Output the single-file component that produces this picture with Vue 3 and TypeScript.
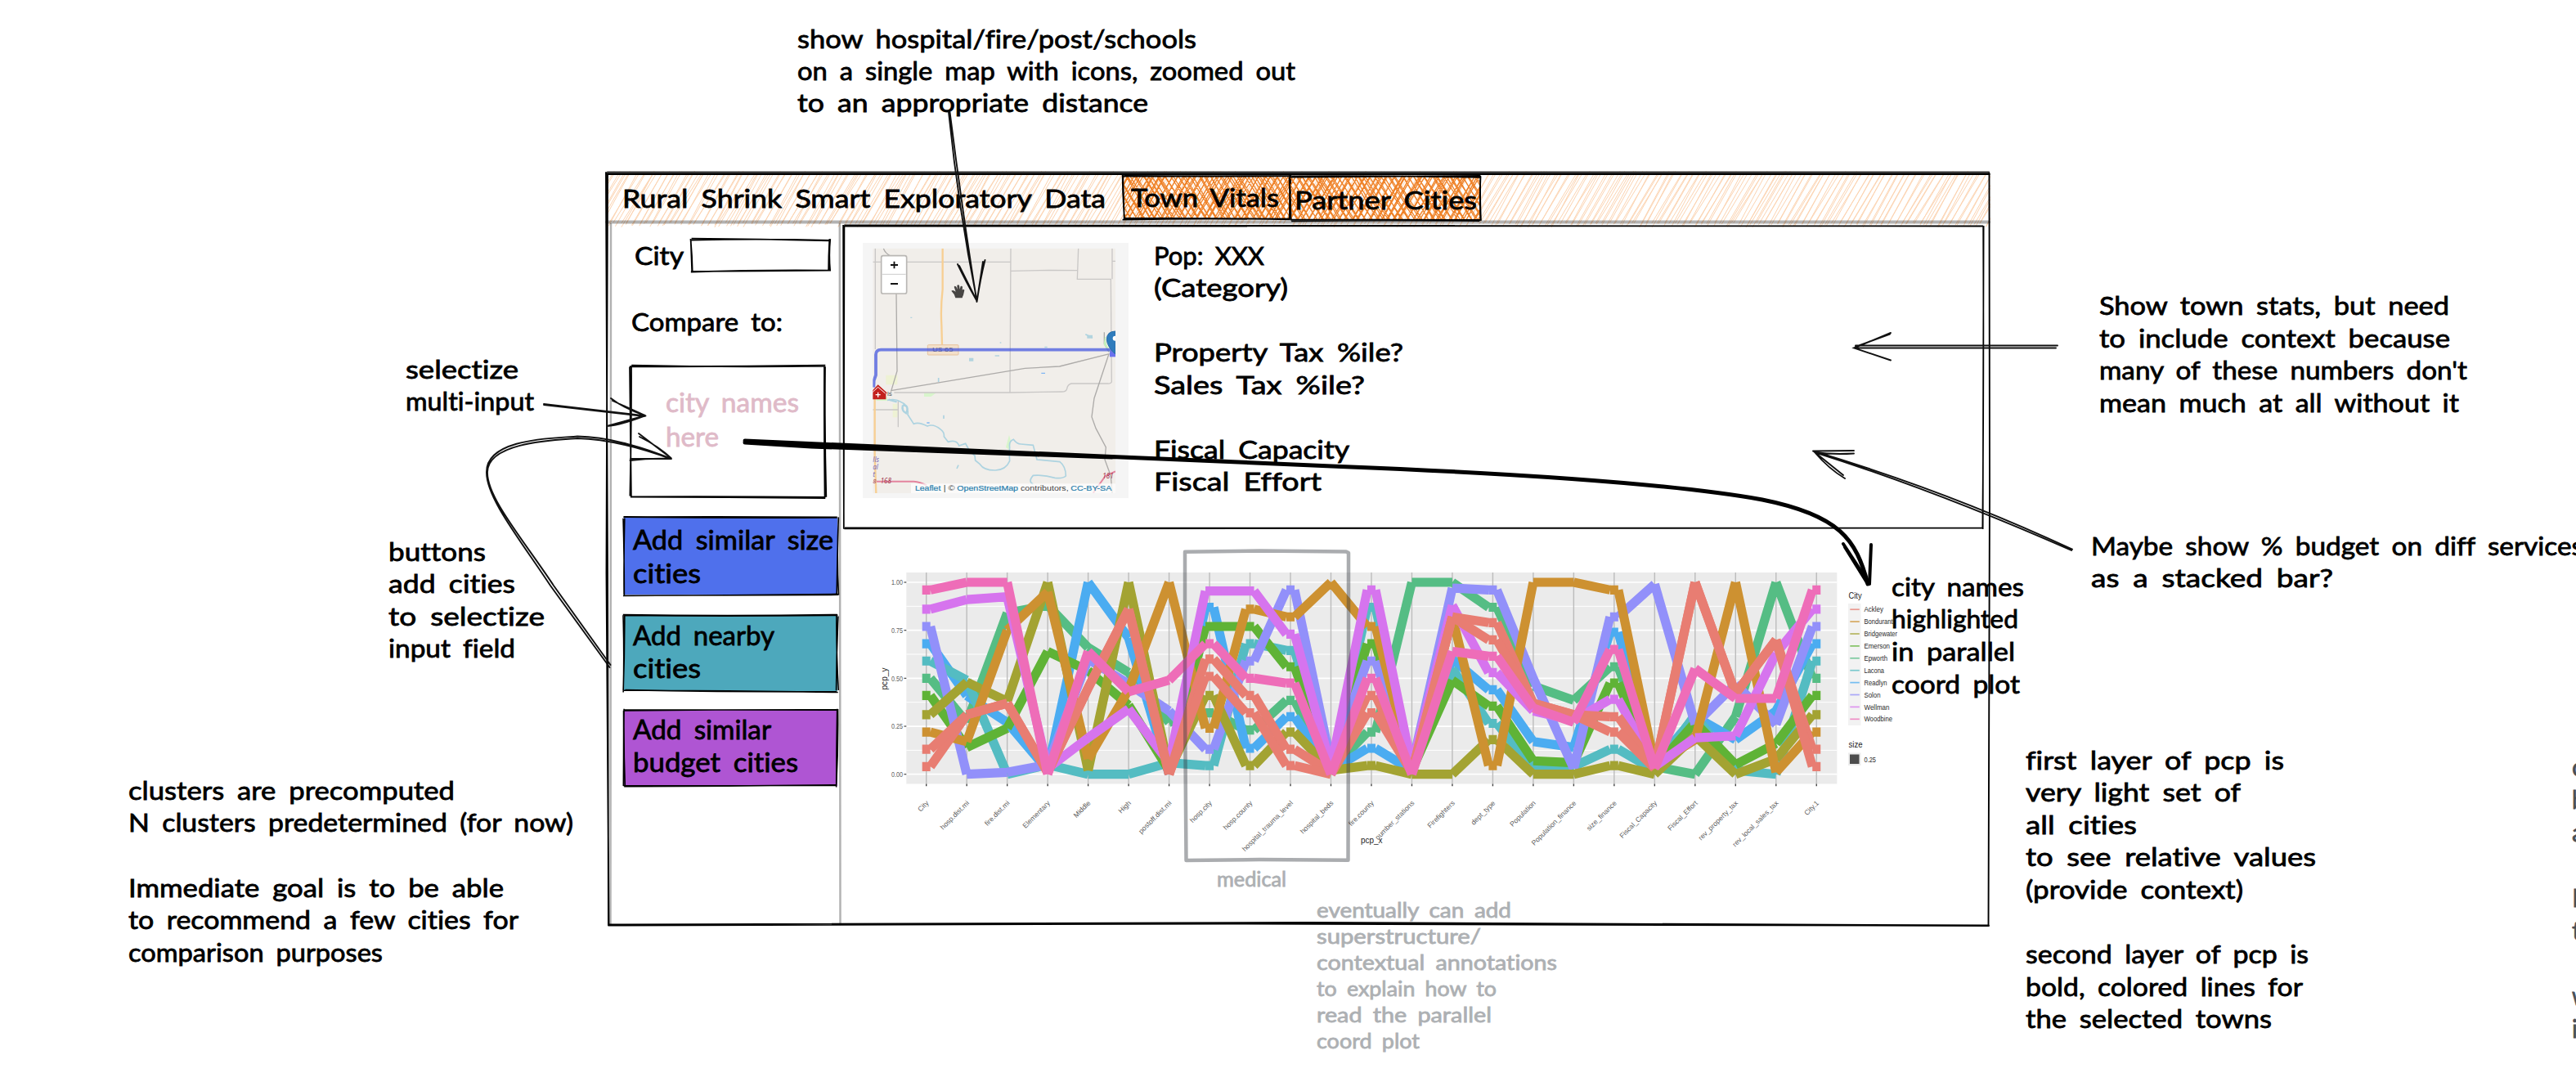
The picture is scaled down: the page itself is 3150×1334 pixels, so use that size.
<script setup lang="ts">
import { h } from 'vue'

type Line = [text: string, width: number]
interface Note { x: number; base: number; pitch?: number; size?: number; tone?: string; lines: Line[] }

// Handwritten text block: every line is fitted to its own written width.
const Scribble = (p: { lines: Line[]; pitch?: number; size?: number }) => {
  const pitch = p.pitch ?? 39.4
  const size = p.size ?? 31.5
  return h('div', { class: 'scribble' }, p.lines.map(([text, w]) =>
    h('svg', { width: w || 1, height: pitch, style: 'display:block;overflow:visible' },
      text ? [h('text', { x: 0, y: 30, textLength: w, lengthAdjust: 'spacingAndGlyphs', 'font-size': size, fill: 'currentColor', stroke: 'currentColor', 'stroke-width': 0.8 }, text)] : [])))
}
Scribble.props = ['lines', 'pitch', 'size']

function rng(seed: number) {
  let s = seed * 9301 + 49297
  return () => { s = (s * 9301 + 49297) % 233280; return s / 233280 }
}

// Double-stroked, slightly wobbly rectangle outline.
const Rough = (p: { w: number; h: number; seed: number; sw?: number; jitter?: number; color?: string; opacity?: number }) => {
  const r = rng(p.seed)
  const j = () => (r() - 0.5) * (p.jitter ?? 3)
  let d = ''
  for (let k = 0; k < 2; k++) {
    const c = [[0, 0, p.w, 0], [p.w, 0, p.w, p.h], [p.w, p.h, 0, p.h], [0, p.h, 0, 0]]
    for (const [x1, y1, x2, y2] of c) {
      d += `M${x1 + j()} ${y1 + j()}Q${(x1 + x2) / 2 + j()} ${(y1 + y2) / 2 + j()} ${x2 + j()} ${y2 + j()}`
    }
  }
  return h('svg', { class: 'rough', width: p.w, height: p.h },
    [h('path', { d, fill: 'none', stroke: p.color ?? '#000', 'stroke-width': p.sw ?? 1.5, opacity: p.opacity ?? 1 })])
}
Rough.props = ['w', 'h', 'seed', 'sw', 'jitter', 'color', 'opacity']

function hatch(w: number, ht: number, gap: number, run: number, seed: number, over: number) {
  const r = rng(seed)
  let d = ''
  for (let x = -Math.abs(run); x < w + Math.abs(run); x += gap) {
    for (let k = 0; k < 2; k++) {
      const a = x + (r() - 0.5) * 4
      const b = a + run + (r() - 0.5) * 5
      d += `M${a.toFixed(1)} ${(ht + r() * over).toFixed(1)}L${b.toFixed(1)} ${(-r() * over * 0.5).toFixed(1)}`
    }
  }
  return d
}
const headerHatch = hatch(1691, 60, 7.6, 37, 3, 6)
const tabHatchA = hatch(204, 53, 7.5, 32, 5, 4)
const tabHatchB = hatch(204, 53, 7.5, -34, 7, 4)
const tabHatchC = hatch(232, 53, 7.5, 32, 11, 4)
const tabHatchD = hatch(232, 53, 7.5, -34, 13, 4)

const title: Line[] = [['Rural Shrink Smart Exploratory Data', 591]]
const stats: Line[] = [['Pop: XXX', 135], ['(Category)', 164], ['', 0], ['Property Tax %ile?', 305], ['Sales Tax %ile?', 258], ['', 0], ['Fiscal Capacity', 239], ['Fiscal Effort', 205]]

const buttons = [
  { cls: 'size', h: 94, seed: 21, lines: [['Add similar size', 245], ['cities', 83]] as Line[] },
  { cls: 'near', h: 92, seed: 22, lines: [['Add nearby', 173], ['cities', 83]] as Line[] },
  { cls: 'budget', h: 93, seed: 25, lines: [['Add similar', 169], ['budget cities', 202]] as Line[] },
]

const notes: Note[] = [
  { x: 975, base: 58, lines: [['show hospital/fire/post/schools', 488], ['on a single map with icons, zoomed out', 609], ['to an appropriate distance', 429]] },
  { x: 495.5, base: 462.5, lines: [['selectize', 138], ['multi-input', 157]] },
  { x: 474.5, base: 685, pitch: 39.6, lines: [['buttons', 119], ['add cities', 155], ['to selectize', 191], ['input field', 155]] },
  { x: 157, base: 977, pitch: 39.7, lines: [['clusters are precomputed', 399], ['N clusters predetermined (for now)', 544], ['', 0], ['Immediate goal is to be able', 459], ['to recommend a few cities for', 477], ['comparison purposes', 311]] },
  { x: 2567, base: 384.5, pitch: 39.6, lines: [['Show town stats, but need', 428], ['to include context because', 429], ['many of these numbers don\'t', 450], ['mean much at all without it', 440]] },
  { x: 2557, base: 678, lines: [['Maybe show % budget on diff services', 602], ['as a stacked bar?', 296]] },
  { x: 2477, base: 940, pitch: 39.6, lines: [['first layer of pcp is', 316], ['very light set of', 263], ['all cities', 136], ['to see relative values', 355], ['(provide context)', 266], ['', 0], ['second layer of pcp is', 346], ['bold, colored lines for', 339], ['the selected towns', 301]] },
  { x: 2313, base: 728, pitch: 39.7, lines: [['city names', 162], ['highlighted', 155], ['in parallel', 151], ['coord plot', 157]] },
  { x: 1487.5, base: 1083.7, size: 25.6, tone: 'faint', lines: [['medical', 85]] },
  { x: 1610, base: 1121, pitch: 32, size: 25.6, tone: 'faint', lines: [['eventually can add', 238], ['superstructure/', 201], ['contextual annotations', 294], ['to explain how to', 220], ['read the parallel', 214], ['coord plot', 126]] },
  { x: 3145, base: 948, pitch: 40, tone: 'slate', lines: [['c', 15], ['b', 16], ['a', 16], ['', 0], ['I', 9], ['t', 12], ['', 0], ['w', 22], ['i', 7]] },
]

// Parallel coordinates
const axes = ['City', 'hosp.dist.mi', 'fire.dist.mi', 'Elementary', 'Middle', 'High', 'postoff.dist.mi', 'hosp.city', 'hosp.county', 'hospital_trauma_level', 'hospital_beds', 'fire.county', 'number_stations', 'Firefighters', 'dept_type', 'Population', 'Population_finance', 'size_finance', 'Fiscal_Capacity', 'Fiscal_Effort', 'rev_property_tax', 'rev_local_sales_tax', 'City.1']
const ax = (i: number) => 1132.7 + i * 49.48
const vy = (v: number) => 946.7 - v * 234.7
const factor = new Set([0, 7, 8, 9, 11, 14, 17, 22])
const series: { color: string; v: number[] }[] = [
  { color: '#55bd84', v: [.5, .27, .84, .88, .66, .53, .27, .32, .23, .385, .02, .22, 1, 1, .87, .46, .385, .56, .04, 0, .3, 1, .5] },
  { color: '#4bacf1', v: [.68, .41, .27, .02, 1, .71, 0, .87, .135, .3, .02, .135, .02, .6, .44, .17, .14, .74, .05, .3, .18, .33, .68] },
  { color: '#54bcc2', v: [.59, .49, 0, .05, 0, 0, .06, .045, .68, .645, .02, .87, .02, .55, .265, .03, .04, .13, .02, .31, .02, 0, .59] },
  { color: '#5fb336', v: [.41, .14, .24, .64, .54, .36, .02, .77, .77, .56, .02, .68, .02, .49, .355, .07, .06, .475, .03, .27, .05, .16, .41] },
  { color: '#9290fa', v: [.77, 0, .01, .05, .6, .47, .33, .13, .59, .96, .06, .59, .04, .97, .96, .5, .03, .82, .99, .26, .47, .26, .77] },
  { color: '#a3a332', v: [.31, .48, .38, 1, .02, 1, .02, .41, .045, .22, .02, .045, 0, 0, .18, 0, 0, .045, 0, .2, 0, .08, .31] },
  { color: '#cd9131', v: [.22, .17, .75, .95, .08, .44, 1, .24, .86, .82, 1, .77, .02, .82, .045, 1, 1, .96, .05, .18, 1, .01, .22] },
  { color: '#d674ee', v: [.86, .91, .925, .03, .19, .34, .06, .955, .955, .73, .04, .96, .04, .88, .53, .33, .28, .39, .04, .19, .2, .63, .86] },
  { color: '#e87d72', v: [.04, .31, .37, .01, .45, .86, 0, .6, .41, .13, .01, .41, .01, .82, .79, .37, .31, .3, .03, 1, .42, .7, .13] },
  { color: '#e87d72', v: [.13, .31, .37, .01, .45, .86, 0, .51, .32, .045, 0, .32, .01, .82, .7, .37, .31, .22, .03, 1, .42, .7, .04] },
  { color: '#ee6db8', v: [.96, 1, 1, 0, .64, .43, .49, .68, .5, .475, 0, .5, 0, .64, .615, .345, .27, .65, .03, .55, .395, .395, .96] },
]
function trace(v: number[]) {
  let d = ''
  for (let i = 0; i < 23; i++) {
    if (factor.has(i)) d += `M${ax(i) - 5} ${vy(v[i])}H${ax(i) + 5}`
    if (i < 22) {
      const a = ax(i) + (factor.has(i) ? 5 : 0)
      const b = ax(i + 1) - (factor.has(i + 1) ? 5 : 0)
      d += `M${a} ${vy(v[i])}L${b} ${vy(v[i + 1])}`
    }
  }
  return d
}
const cities: [string, string, number][] = [['Ackley', '#e87d72', 23.5], ['Bondurant', '#cd9131', 35], ['Bridgewater', '#a3a332', 40.5], ['Emerson', '#5fb336', 31.5], ['Epworth', '#55bd84', 28.5], ['Lacona', '#54bcc2', 24.5], ['Readlyn', '#4bacf1', 28], ['Solon', '#9290fa', 20], ['Wellman', '#d674ee', 31], ['Woodbine', '#ee6db8', 34.5]]
</script>

<template>
  <div class="board">
    <section class="app">
      <header class="bar">
        <svg class="rough" width="1691" height="62">
          <clipPath id="strip"><rect x="-1" y="-4" width="1693" height="74" /></clipPath>
          <path :d="headerHatch" clip-path="url(#strip)" stroke="#fbc08e" stroke-width="1" opacity=".68" />
        </svg>
        <Scribble class="title" :lines="title" />
        <div class="tab town">
          <svg class="rough clip" width="204" height="53"><path :d="tabHatchA + tabHatchB" stroke="#ef8228" stroke-width="1.25" /></svg>
          <Rough :w="204" :h="53" :seed="4" :sw="1.8" />
          <Scribble :lines="[['Town Vitals', 181]]" />
        </div>
        <div class="tab partner">
          <svg class="rough clip" width="232" height="53"><path :d="tabHatchC + tabHatchD" stroke="#ef8228" stroke-width="1.25" /></svg>
          <Rough :w="232" :h="53" :seed="9" :sw="1.8" />
          <Scribble :lines="[['Partner Cities', 223]]" />
        </div>
      </header>
      <div class="body">
        <aside class="side">
          <div class="row">
            <Scribble :lines="[['City', 60]]" />
            <div class="input"><Rough :w="168" :h="38" :seed="14" :sw="1.8" /></div>
          </div>
          <Scribble class="compare" :lines="[['Compare to:', 185]]" />
          <div class="select">
            <Rough :w="238" :h="160" :seed="17" :sw="1.8" />
            <Scribble :lines="[['city names', 163], ['here', 65]]" :pitch="42" :size="33" />
          </div>
          <div v-for="b in buttons" :key="b.cls" class="btn" :class="b.cls">
            <Rough :w="261" :h="b.h" :seed="b.seed" :sw="1.6" />
            <Scribble :lines="b.lines" :pitch="40.5" :size="32.5" />
          </div>
        </aside>
        <main class="main">
          <div class="panel">
            <Rough :w="1393" :h="370" :seed="31" :sw="1.7" :jitter="2" />
            <div class="map">
              <svg width="325" height="311.7" viewBox="75 50 975 935" fill="none">
                <clipPath id="tile"><rect x="112" y="70" width="890" height="898" /></clipPath>
                <g clip-path="url(#tile)">
                  <rect x="112" y="70" width="890" height="898" fill="#f1eeea" />
                  <path d="M160 535h42v35h-42zM185 640h18v50h-18z" fill="#eef2d4" />
                  <path d="M300 600h45l-20 14h-25zM600 800l12-45 6 20-4 35zM125 615h40v14h-40z" fill="#d8f5cb" />
                  <g stroke="#c9c7c6" stroke-width="4">
                    <path d="M121 70V440M112 120H617M618 70L615 598M619 153L760 150 861 151M866 70L862 183H985L988 560Q985 567 975 566H840Q826 570 824 585 822 596 805 596L615 599 190 599M990 70V183M205 628V726M112 662H205M990 117h12" />
                  </g>
                  <g stroke="#adaba9" stroke-width="4">
                    <path d="M151 70Q156 88 180 100M198 235L201 520 178 597M178 592L670 510 797 503 980 457M978 457L924 620 915 688 930 730 967 800 963 845 985 905 990 968M961 378V420L978 450" />
                  </g>
                  <path d="M368 70V220Q360 290 364 350L366 425M119 590V830L124 968" stroke="#f7cf93" stroke-width="7" />
                  <g stroke="#add3e0" stroke-width="5">
                    <path d="M165 627Q195 620 212 632 245 645 240 680 248 692 262 714 280 705 312 722 335 712 362 735 375 745 373 760L388 780Q420 770 428 794L452 786 468 815 486 830 488 848 505 862Q520 885 562 884 600 883 614 850 612 825 614 800 610 778 628 771 640 788 655 788L700 792 714 845 798 853Q820 870 820 905 810 915 780 912 740 900 700 903 680 925 700 935M372 682V695M353 545V560M426 865L420 878M892 385L918 398" />
                    <path d="M222 645q25 0 12 30-18-10-12-30M170 625l30 8" stroke-width="7" />
                  </g>
                  <path d="M465 472h16v12h-16zM560 462h16v4h-16zM742 430h10v5h-10zM898 388h20v12h-20zM578 414h5v4h-5zM250 322h6v4h-6z" fill="#b2d4df" />
                  <path d="M730 526h14v4h-14zM310 708h10v4h-10z" fill="#7fb6f4" />
                  <path d="M125 925H262Q285 926 310 940M920 968L965 905 1002 888" stroke="#e4849e" stroke-width="6" />
                  <path d="M965 395q-5 25 18 55l-22-28z" fill="#c4f0bb" stroke="#c4f0bb" stroke-width="4" />
                  <rect x="313" y="424" width="113" height="37" rx="3" fill="#f3e0ca" stroke="#e8c39e" stroke-width="3" />
                  <text x="330" y="450" font-family="Noto Sans" font-size="23" textLength="77" lengthAdjust="spacingAndGlyphs" fill="#6d625d">US 65</text>
                  <path d="M115 580L116 555 123 535V462Q122 442 142 442H985L992 460" stroke="#4356df" stroke-opacity=".74" stroke-width="11.500" />
                  <rect x="981" y="450" width="21" height="18" fill="#6b72ee" />
                  <path d="M1002 374Q970 374 970 405 972 430 998 455L1002 458Z" fill="#2f7cbd" stroke="#286da8" stroke-width="3" />
                  <circle cx="1001" cy="400" r="9" fill="#fff" />
                  <text x="165" y="611" font-family="Liberation Sans" font-size="24" fill="#555">ls</text>
                  <path d="M104 598L131 570 164 600 160 604V624H104Z" fill="#c3201d" />
                  <path d="M106 602L131 579 158 602" stroke="#fff" stroke-width="3" />
                  <path d="M131 598v18M122 607h18" stroke="#fff" stroke-width="4" />
                  <g font-family="Noto Sans" font-style="italic" font-size="24" fill="#7d68b8">
                    <text x="112" y="855">lls</text><text x="112" y="881">al</text><text x="112" y="907">t</text>
                  </g>
                  <text x="112" y="933" font-family="Noto Sans" font-style="italic" font-size="22" fill="#a43a50">8</text>
                  <text x="140" y="933" font-family="Noto Sans" font-style="italic" font-size="24" fill="#a43a50">168</text>
                  <text x="955" y="915" font-family="Noto Sans" font-style="italic" font-size="24" fill="#a43a50">181</text>
                  <rect x="252" y="933" width="750" height="35" fill="#fff" fill-opacity=".72" />
                  <g font-family="Liberation Sans" font-size="25.5">
                    <text x="267" y="958" textLength="94" lengthAdjust="spacingAndGlyphs" fill="#2a7fae" stroke="#2a7fae" stroke-width=".6">Leaflet</text>
                    <text x="371" y="958" textLength="42" lengthAdjust="spacingAndGlyphs" fill="#444">| ©</text>
                    <text x="421" y="958" textLength="224" lengthAdjust="spacingAndGlyphs" fill="#2a7fae" stroke="#2a7fae" stroke-width=".6">OpenStreetMap</text>
                    <text x="654" y="958" textLength="176" lengthAdjust="spacingAndGlyphs" fill="#444">contributors,</text>
                    <text x="838" y="958" textLength="150" lengthAdjust="spacingAndGlyphs" fill="#2a7fae" stroke="#2a7fae" stroke-width=".6">CC-BY-SA</text>
                  </g>
                  <rect x="143" y="97" width="93" height="139" rx="7" fill="#fff" stroke="#b9b7b4" stroke-width="5" />
                  <path d="M146 165h87" stroke="#ccc" stroke-width="3" />
                  <path d="M177 131h27M190.500 118v26M177 200h27" stroke="#111" stroke-width="5.500" />
                  <path d="M401 231q6-5 16 3l-6-18q4-6 9 2l3 8-1-15q5-4 8 0l2 14 3-11q6-3 7 3l-1 11q5-6 8 1l-5 22v-4l-3 10h-25q-3-15-15-26z" transform="translate(-1 -5)" fill="#484644" />
                </g>
              </svg>
            </div>
            <Scribble class="stats" :lines="stats" :pitch="39.5" />
          </div>
          <svg class="chart" width="1280" height="370" viewBox="1070 690 1280 370">
            <rect x="1108.300" y="700" width="1138" height="258.500" fill="#ebebeb" />
            <g stroke="#fff">
              <path v-for="n in 5" :key="'M' + n" :d="`M1108.3 ${vy((n - 1) / 4)}H2246.3`" stroke-width="1.7" />
              <path v-for="n in 4" :key="'m' + n" :d="`M1108.3 ${vy((n - .5) / 4)}H2246.3`" stroke-width="1" />
            </g>
            <path v-for="(a, i) in axes" :key="a" :d="`M${ax(i)} 700V958.5`" stroke="#bcbcbc" stroke-width="1.4" />
            <path v-for="(s, i) in series" :key="i" :d="trace(s.v)" :stroke="s.color" stroke-width="11.2" fill="none" />
            <g class="tick">
              <template v-for="n in 5" :key="n">
                <text x="1090" :y="vy((n - 1) / 4) + 3.2" textLength="14" lengthAdjust="spacingAndGlyphs">{{ ((n - 1) / 4).toFixed(2) }}</text>
                <path :d="`M1105.5 ${vy((n - 1) / 4)}h2.8`" stroke="#444" stroke-width="1.2" />
              </template>
              <template v-for="(a, i) in axes" :key="a">
                <path :d="`M${ax(i)} 958.500v2.800`" stroke="#444" stroke-width="1.4" />
                <text text-anchor="end" :transform="`translate(${ax(i) + 3.5} 982.5) rotate(-45)`">{{ a }}</text>
              </template>
            </g>
            <g class="axis-title">
              <text transform="translate(1085 843.500) rotate(-90)" textLength="27" lengthAdjust="spacingAndGlyphs">pcp_y</text>
              <text x="1664" y="1031" textLength="26.500" lengthAdjust="spacingAndGlyphs">pcp_x</text>
              <text x="2250.600" y="732" dx="10" textLength="16" lengthAdjust="spacingAndGlyphs">City</text>
              <text x="2260.600" y="914" textLength="17" lengthAdjust="spacingAndGlyphs">size</text>
            </g>
            <rect x="2260" y="738" width="15.500" height="149" fill="#f2f2f2" />
            <g v-for="(c, i) in cities" :key="c[0]" class="key">
              <path :d="`M2262.3 ${745.2 + i * 14.9}h11.5`" :stroke="c[1]" stroke-width="1.7" opacity=".75" />
              <text x="2279.500" :y="748.3 + i * 14.9" :textLength="c[2]" lengthAdjust="spacingAndGlyphs">{{ c[0] }}</text>
            </g>
            <rect x="2260" y="920.500" width="15.500" height="15.500" fill="#ececec" />
            <rect x="2262" y="922.500" width="11.500" height="11.500" fill="#4d4d4d" />
            <text class="key-label" x="2279.500" y="931.500" textLength="14.500" lengthAdjust="spacingAndGlyphs">0.25</text>
          </svg>
        </main>
      </div>
    </section>

    <div v-for="(n, i) in notes" :key="i" class="note" :class="n.tone" :style="{ left: n.x + 'px', top: n.base - 29.5 + 'px' }">
      <Scribble :lines="n.lines" :pitch="n.pitch" :size="n.size" />
    </div>

    <svg class="ink" width="3150" height="1334" fill="none" stroke-linecap="round">
      <g stroke="#000" stroke-opacity=".3">
        <path d="M742 271.500H2432" stroke-width="4" />
        <path d="M747 274L746.500 1130M1026.800 274L1027.500 1130" stroke-width="2.500" />
      </g>
      <path d="M743 210.800H2432" stroke="#333" stroke-width="2.400" />
      <g stroke="#000" stroke-width="1.900">
        <path d="M742 213H2433M743 212.500L741.500 700 744.500 1131M741 211L743 700 744 1131M2432.500 212L2433 600 2431.500 1132M744 1130.500L1600 1128 2432 1131.500M744 1131.500L1500 1129.500 2432 1132" />
      </g>
      <g stroke="#343a40" stroke-opacity=".42" stroke-width="4.500" stroke-linejoin="round">
        <path d="M1449 674.800L1540 673.500 1646 674.500 1649 676 1649 820 1648.500 1051.800 1540 1051 1450.500 1052 1449 860Z" />
      </g>
      <g stroke="#111" stroke-width="1.900">
        <path d="M1160 137Q1172 255 1194.500 367M1161.500 137Q1177 260 1194.500 369M1171 323Q1181 344 1194 367L1173 325M1204.500 318Q1199 340 1194.500 369L1202 320" />
        <path d="M665 494L789.500 508.500M665 495L788 509M747 487Q764 500 789 508L749 490M742 521Q758 520 789.500 508L744 520.500" />
        <path d="M745.500 816L673 716C636 660 594 608 595 577 595 535 680 536 706 533.500 745 534 790 548 821 561M746.500 813L677 716C640 660 595 608 596 577 597 540 680 538 706 536 745 537 790 550 820 561M781 530L821 560.500Q806 546 782 534M770.500 563Q795 560 821 561L771 561" />
        <path d="M2516 422.500H2269M2514 425.500H2268M2312 407L2267 425.500 2312 440.500M2311 408.500L2269 424" />
        <path d="M2534 671.700Q2380 600 2217 551.500M2533 673Q2370 601 2219 553M2217 551.500L2267 551M2219 553Q2240 556 2267 554.500M2219 553Q2236 573 2256 585M2218 552L2254 581" />
      </g>
      <g stroke="#000" stroke-width="5">
        <path d="M911 539L1360 558.500 1640 570.500C1880 580 2060 594 2155 611 2250 630 2270 660 2284 714M911 541L992 546 1360 559" />
        <path d="M2254 665L2286 714M2256 669L2284 714M2288 666L2286 714" stroke-width="4" />
      </g>
    </svg>
  </div>
</template>

<style>
body { background: #fff; overflow: hidden; }
.rough { position: absolute; left: 0; top: 0; overflow: visible; pointer-events: none; }
.scribble text { word-spacing: 0.2em; font-variant-ligatures: none; }
</style>

<style scoped>
.board { position: relative; width: 3150px; height: 1334px; overflow: hidden; background: #fff; color: #000; font-family: Lato, "Open Sans", sans-serif; }
.app { position: absolute; left: 742px; top: 212px; width: 1691px; height: 920px; display: flex; flex-direction: column; }
.bar { position: relative; display: flex; align-items: flex-start; height: 62px; flex: none; }
.title { position: relative; margin: 12px 22px 0 19px; width: 591px; }
.tab { position: relative; box-sizing: border-box; height: 53px; }
.tab > div { position: relative; }
.rough.clip { overflow: hidden; }
.town { width: 204px; margin-top: 3px; padding: 7.5px 0 0 8.5px; }
.partner { width: 232px; margin-top: 4px; padding: 10px 0 0 5px; }
.body { display: flex; flex: 1; }
.side { width: 281px; margin-left: 5px; padding-top: 19px; flex: none; box-sizing: border-box; }
.row { display: flex; height: 40px; padding-left: 29px; }
.row > .scribble { padding-top: 1px; }
.input { position: relative; width: 168px; height: 38px; margin-left: 10px; }
.compare { margin: 42px 0 0 25px; }
.select { position: relative; box-sizing: border-box; width: 238px; height: 160px; margin: 33.5px 0 0 24px; padding: 26px 0 0 43px; color: #dfbac8; }
.btn { position: relative; box-sizing: border-box; width: 261px; margin-left: 16px; padding-left: 11px; }
.btn > div { position: relative; }
.size { height: 94px; margin-top: 25px; padding-top: 9.5px; background: #4f70ec; }
.near { height: 92px; margin-top: 26px; padding-top: 6px; background: #4da8bc; }
.budget { height: 93px; margin-top: 23px; padding-top: 6px; background: #af55d3; }
.main { margin-left: 4px; padding-top: 2px; }
.panel { position: relative; display: flex; align-items: flex-start; width: 1393px; height: 370px; }
.map { width: 325px; height: 312px; margin: 20.5px 31px 0 23px; background: #f5f5f5; }
.map svg { display: block; }
.stats { margin-top: 17.5px; }
.chart { display: block; margin: 44px 0 0 38px; overflow: visible; font-family: "Liberation Sans", sans-serif; }
.tick text { font-size: 8.6px; fill: #606060; }
.axis-title text { font-size: 10.5px; fill: #222; }
.key text, .key-label { font-size: 8.6px; fill: #2a2a2a; }
.note { position: absolute; }
.faint { color: #adb0b3; }
.slate { color: #495057; }
.ink { position: absolute; left: 0; top: 0; }
</style>
